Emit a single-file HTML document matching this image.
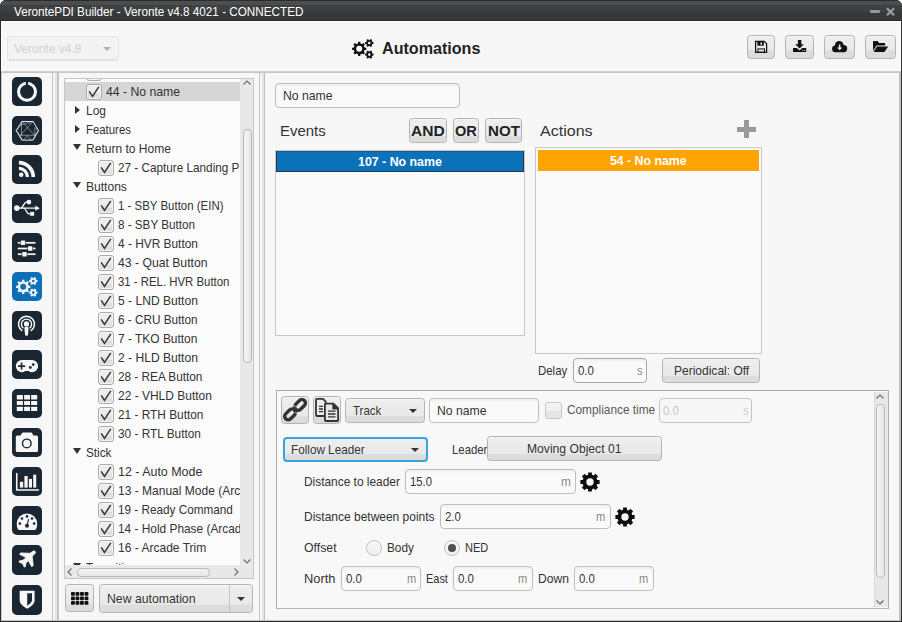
<!DOCTYPE html><html><head><meta charset="utf-8"><title>VerontePDI Builder</title><style>
*{box-sizing:border-box;margin:0;padding:0}
html,body{width:902px;height:622px;overflow:hidden}
body{background:#fff;font-family:"Liberation Sans",sans-serif;font-size:13px;color:#333;position:relative}
.a{position:absolute}
.t{position:absolute;white-space:pre;line-height:1;transform-origin:0 0}
.btn{position:absolute;border:1px solid #b4b4b4;border-radius:3.5px;background:linear-gradient(#eeeeee 0%,#e9e9e9 72%,#dddddd 73%,#dcdcdc 100%);box-shadow:inset 0 1px 0 #f6f6f6}
.inp{position:absolute;border:1px solid #bdbdbd;border-radius:4px;background:linear-gradient(#efefef,#fafafa 4px,#fafafa)}
.ico{position:absolute;left:12px;width:30px;height:29px;border-radius:5px;background:#1b2633;overflow:hidden}
.ico svg{position:absolute;left:0;top:0}
.cb{position:absolute;width:16px;height:16px;border:1px solid #ababab;box-shadow:inset 0 0 0 1px #f4f4f4;border-radius:3px;background:linear-gradient(#eeeeee 0%,#e9e9e9 62%,#dfdfdf 63%,#dfdfdf 100%)}
.arr{position:absolute;width:0;height:0;border-left:4px solid transparent;border-right:4px solid transparent;border-top:4px solid #333}
</style></head><body>
<div class="a" style="left:0px;top:0px;width:902px;height:622px;background:#2d2d2d;border-radius:6px 6px 0 0"></div>
<div class="a" style="left:0px;top:0px;width:902px;height:21px;background:linear-gradient(#2c2c2c 0,#2c2c2c 1px,#4c4e4f 1px,#4a4c4d 5.5px,#3e4142 5.5px,#3d4041 12.5px,#37393a 12.5px,#36383a 20px,#2b2b2b 20px);border-radius:6px 6px 0 0"></div>
<div class="t" style="left:14.0px;top:5.0px;font-size:13px;color:#fff;font-weight:normal;transform:scaleX(0.9000);">VerontePDI Builder - Veronte v4.8 4021 - CONNECTED</div>
<div class="a" style="left:870.3px;top:9.8px;width:9.700000000000045px;height:3.0px;background:#96989a;border-radius:1px"></div>
<svg class="a" style="left:884px;top:5px" width="14" height="14" viewBox="884 5 14 14"><path d="M887 8.2 L894 15.2 M894 8.2 L887 15.2" stroke="#9c9ea0" stroke-width="2.2"/></svg>
<div class="a" style="left:1px;top:21px;width:900px;height:599.5px;background:#f7f7f7"></div>
<div class="a" style="left:1px;top:21px;width:1px;height:51px;background:#fff"></div>
<div class="a" style="left:1px;top:72px;width:1px;height:548px;background:#c8c8c8"></div>
<div class="a" style="left:1px;top:21px;width:900px;height:1px;background:#fff"></div>
<div class="a" style="left:900px;top:21px;width:1px;height:51px;background:#fff"></div>
<div class="a" style="left:1px;top:619.5px;width:900px;height:1.0px;background:#c4c4c4"></div>
<div class="a" style="left:1px;top:71px;width:900px;height:2px;background:linear-gradient(#d2d2d2,#c2c2c2)"></div>
<div class="a" style="left:7px;top:36px;width:112px;height:25px;border:1px solid #e4e4e4;border-radius:3px;background:#f3f3f3"></div>
<div class="a" style="left:9px;top:59px;width:108px;height:1px;border-bottom:1px dotted #d4d4d4"></div>
<div class="t" style="left:14.0px;top:41.8px;font-size:13.5px;color:#d2d2d2;font-weight:normal;transform:scaleX(0.8890);">Veronte v4.8</div>
<div class="arr" style="left:103px;top:47px;border-top-color:#b0b0b0"></div>
<svg class="a" style="left:347.8px;top:34px" width="30" height="29" viewBox="0 0 30 29"><path d="M16.00 13.61 L18.31 13.67 L18.31 15.93 L16.00 15.99 Z M15.44 17.35 L17.02 19.03 L15.43 20.62 L13.75 19.04 Z M12.39 19.60 L12.33 21.91 L10.07 21.91 L10.01 19.60 Z M8.65 19.04 L6.97 20.62 L5.38 19.03 L6.96 17.35 Z M6.40 15.99 L4.09 15.93 L4.09 13.67 L6.40 13.61 Z M6.96 12.25 L5.38 10.57 L6.97 8.98 L8.65 10.56 Z M10.01 10.00 L10.07 7.69 L12.33 7.69 L12.39 10.00 Z M13.75 10.56 L15.43 8.98 L17.02 10.57 L15.44 12.25 Z " fill="#111"/><circle cx="11.20" cy="14.80" r="5.5" fill="#111"/><circle cx="11.20" cy="14.80" r="3.0" fill="#f7f7f7"/><path d="M23.88 7.93 L25.48 8.00 L25.48 10.00 L23.88 10.07 Z M23.51 10.70 L24.26 12.12 L22.52 13.12 L21.66 11.77 Z M20.94 11.77 L20.08 13.12 L18.34 12.12 L19.09 10.70 Z M18.72 10.07 L17.12 10.00 L17.12 8.00 L18.72 7.93 Z M19.09 7.30 L18.34 5.88 L20.08 4.88 L20.94 6.23 Z M21.66 6.23 L22.52 4.88 L24.26 5.88 L23.51 7.30 Z " fill="#111"/><circle cx="21.30" cy="9.00" r="3.1" fill="#111"/><circle cx="21.30" cy="9.00" r="1.3" fill="#f7f7f7"/><path d="M23.88 19.53 L25.48 19.60 L25.48 21.60 L23.88 21.67 Z M23.51 22.30 L24.26 23.72 L22.52 24.72 L21.66 23.37 Z M20.94 23.37 L20.08 24.72 L18.34 23.72 L19.09 22.30 Z M18.72 21.67 L17.12 21.60 L17.12 19.60 L18.72 19.53 Z M19.09 18.90 L18.34 17.48 L20.08 16.48 L20.94 17.83 Z M21.66 17.83 L22.52 16.48 L24.26 17.48 L23.51 18.90 Z " fill="#111"/><circle cx="21.30" cy="20.60" r="3.1" fill="#111"/><circle cx="21.30" cy="20.60" r="1.3" fill="#f7f7f7"/></svg>
<div class="t" style="left:382.4px;top:41.1px;font-size:16px;color:#222;font-weight:bold;transform:scaleX(1.0063);">Automations</div>
<div class="btn" style="left:747px;top:35px;width:28px;height:24px;background:linear-gradient(#eeeeee 0%,#e9e9e9 64%,#dddddd 65%,#dcdcdc 100%)"></div>
<div class="btn" style="left:785px;top:35px;width:29px;height:24px;background:linear-gradient(#eeeeee 0%,#e9e9e9 64%,#dddddd 65%,#dcdcdc 100%)"></div>
<div class="btn" style="left:824px;top:35px;width:31px;height:24px;background:linear-gradient(#eeeeee 0%,#e9e9e9 64%,#dddddd 65%,#dcdcdc 100%)"></div>
<div class="btn" style="left:865px;top:35px;width:31px;height:24px;background:linear-gradient(#eeeeee 0%,#e9e9e9 64%,#dddddd 65%,#dcdcdc 100%)"></div>
<svg class="a" style="left:754px;top:40px" width="14" height="14" viewBox="754 40 14 14"><path d="M755.6 41.4 L764.3 41.4 L766.6 43.7 L766.6 52.3 L755.6 52.3 Z" fill="none" stroke="#111" stroke-width="1.25"/><rect x="757.4" y="41.4" width="6.4" height="4.3" fill="#111"/><rect x="760.5" y="42.4" width="1.4" height="2.5" fill="#eee"/><rect x="757.9" y="48.9" width="6.6" height="3.4" fill="none" stroke="#111" stroke-width="1"/></svg>
<svg class="a" style="left:792px;top:39px" width="16" height="15" viewBox="792 39 16 15"><path d="M797.9 40.1 L801.3 40.1 L801.3 44.3 L803.8 44.3 L799.6 48.6 L795.2 44.3 L797.9 44.3 Z" fill="#111"/><path d="M793 48.1 L796.8 48.1 L799.6 50.4 L802.2 48.1 L806.2 48.1 L806.2 52 L793 52 Z" fill="#111"/><rect x="802.3" y="50.1" width="1" height="0.9" fill="#ddd"/><rect x="804.2" y="50.1" width="1" height="0.9" fill="#ddd"/></svg>
<svg class="a" style="left:832px;top:40.8px" width="16" height="12" viewBox="0 0 16 12"><circle cx="7.2" cy="4.3" r="4.3" fill="#111"/><circle cx="3.4" cy="7.9" r="3.3" fill="#111"/><circle cx="11.6" cy="7.6" r="3.6" fill="#111"/><rect x="3.4" y="6.5" width="8.2" height="4.7" fill="#111"/><path d="M6.9 3.6 L8.4 3.6 L8.4 6.4 L10.3 6.4 L7.65 9.3 L5 6.4 L6.9 6.4 Z" fill="#eee"/></svg>
<svg class="a" style="left:873px;top:40.8px" width="16" height="12" viewBox="0 0 16 12"><path d="M0 0.8 Q0 0 0.8 0 L4.4 0 Q5.2 0 5.4 0.8 L5.8 2 L11.4 2 Q12.2 2 12.2 2.8 L12.2 4.6 L3.4 4.6 L0 10 Z" fill="#111"/><path d="M3.8 5.6 L15.2 5.6 L11.4 10.9 L0.6 10.9 Z" fill="#111"/></svg>
<div class="a" style="left:52px;top:73px;width:1px;height:547px;background:#c6c6c6"></div>
<div class="a" style="left:55px;top:73px;width:2px;height:547px;background:#e4e4e4"></div>
<div class="a" style="left:57px;top:73px;width:2px;height:547px;background:#c4c4c4"></div>
<div class="a" style="left:259px;top:73px;width:1px;height:547px;background:#c6c6c6"></div>
<div class="a" style="left:262px;top:73px;width:2px;height:547px;background:#e4e4e4"></div>
<div class="a" style="left:264px;top:73px;width:1px;height:547px;background:#c0c0c0"></div>
<div class="a" style="left:898.8px;top:73px;width:1.8000000000000682px;height:547px;background:#c2c2c2"></div>
<div class="ico" style="top:77px;height:29px;background:#1b2633"><svg width="30" height="29" viewBox="0 0 30 29"><circle cx="15" cy="14.8" r="8.5" fill="none" stroke="#f7f7f7" stroke-width="3"/><rect x="13.85" y="3" width="2.3" height="6" fill="#1b2633"/></svg></div>
<div class="ico" style="top:116px;height:29px;background:#1b2633"><svg width="30" height="29" viewBox="0 0 30 29"><polygon points="4.2,14.6 9.9,5.5 21.1,5.5 26.5,14.6 21.1,24.1 9.9,24.1" fill="none" stroke="#f7f7f7" stroke-width="0.95"/><g stroke="#f7f7f7" stroke-width="0.55" opacity="0.8" fill="none"><path d="M9.9 5.5 L22.6 19.3 M21.1 5.5 L8.4 19.3 M7.9 19.3 L22.9 19.3 M9.5 5.9 L9.5 19.3 M22.9 11.5 L22.9 19.3 M11.6 24 L15.4 19.6 L19.1 24 M9.5 8.6 Q14 7.2 19.1 6.5 M4.2 14.6 L9.5 8.6 M26.5 14.6 L22.9 11.5 M4.2 14.6 L8.4 19.3 L9.9 24.1 M26.5 14.6 L22.9 19.3 L21.1 24.1"/></g></svg></div>
<div class="ico" style="top:155px;height:29px;background:#1b2633"><svg width="30" height="29" viewBox="0 0 30 29"><path d="M6.9 7.65 A14.35 14.35 0 0 1 21.25 22.0" fill="none" stroke="#f7f7f7" stroke-width="3.7"/><path d="M6.9 13.45 A8.55 8.55 0 0 1 15.450000000000001 22.0" fill="none" stroke="#f7f7f7" stroke-width="3.2"/><circle cx="9.2" cy="19.7" r="2.3" fill="#f7f7f7"/></svg></div>
<div class="ico" style="top:194px;height:29px;background:#1b2633"><svg width="30" height="29" viewBox="0 0 30 29"><circle cx="4.8" cy="14.1" r="2.8" fill="#f7f7f7"/><path d="M6 14.1 L24 14.1" stroke="#f7f7f7" stroke-width="1.4"/><polygon points="23.3,11.5 27.8,14.2 23.3,16.8" fill="#f7f7f7"/><path d="M8.5 14.1 C11.5 14.1 11.5 8.2 14.5 8.2 L16.5 8.2" fill="none" stroke="#f7f7f7" stroke-width="1.3"/><circle cx="16.9" cy="8.1" r="2.4" fill="#f7f7f7"/><path d="M11.5 14.1 C14.5 14.1 14 19.8 17 19.8 L18.5 19.8" fill="none" stroke="#f7f7f7" stroke-width="1.3"/><rect x="18.2" y="17.9" width="3.9" height="3.9" fill="#f7f7f7"/></svg></div>
<div class="ico" style="top:233px;height:29px;background:#1b2633"><svg width="30" height="29" viewBox="0 0 30 29"><rect x="5.8" y="8.950000000000001" width="17.7" height="1.7" fill="#f7f7f7"/><rect x="8.200000000000001" y="7.000000000000001" width="5.6" height="5.6" fill="#1b2633"/><rect x="8.8" y="7.6000000000000005" width="4.4" height="4.4" rx="0.5" fill="#f7f7f7"/><rect x="5.8" y="14.65" width="17.7" height="1.7" fill="#f7f7f7"/><rect x="15.4" y="12.7" width="5.6" height="5.6" fill="#1b2633"/><rect x="16" y="13.3" width="4.4" height="4.4" rx="0.5" fill="#f7f7f7"/><rect x="5.8" y="20.349999999999998" width="17.7" height="1.7" fill="#f7f7f7"/><rect x="9.700000000000001" y="18.4" width="5.6" height="5.6" fill="#1b2633"/><rect x="10.3" y="19.0" width="4.4" height="4.4" rx="0.5" fill="#f7f7f7"/></svg></div>
<div class="ico" style="top:272px;height:29px;background:#0b70b8"><svg width="30" height="29" viewBox="0 0 30 29"><path d="M16.00 13.61 L18.31 13.67 L18.31 15.93 L16.00 15.99 Z M15.44 17.35 L17.02 19.03 L15.43 20.62 L13.75 19.04 Z M12.39 19.60 L12.33 21.91 L10.07 21.91 L10.01 19.60 Z M8.65 19.04 L6.97 20.62 L5.38 19.03 L6.96 17.35 Z M6.40 15.99 L4.09 15.93 L4.09 13.67 L6.40 13.61 Z M6.96 12.25 L5.38 10.57 L6.97 8.98 L8.65 10.56 Z M10.01 10.00 L10.07 7.69 L12.33 7.69 L12.39 10.00 Z M13.75 10.56 L15.43 8.98 L17.02 10.57 L15.44 12.25 Z " fill="#f7f7f7"/><circle cx="11.20" cy="14.80" r="5.5" fill="#f7f7f7"/><circle cx="11.20" cy="14.80" r="3.0" fill="#0b70b8"/><path d="M23.88 7.93 L25.48 8.00 L25.48 10.00 L23.88 10.07 Z M23.51 10.70 L24.26 12.12 L22.52 13.12 L21.66 11.77 Z M20.94 11.77 L20.08 13.12 L18.34 12.12 L19.09 10.70 Z M18.72 10.07 L17.12 10.00 L17.12 8.00 L18.72 7.93 Z M19.09 7.30 L18.34 5.88 L20.08 4.88 L20.94 6.23 Z M21.66 6.23 L22.52 4.88 L24.26 5.88 L23.51 7.30 Z " fill="#f7f7f7"/><circle cx="21.30" cy="9.00" r="3.1" fill="#f7f7f7"/><circle cx="21.30" cy="9.00" r="1.3" fill="#0b70b8"/><path d="M23.88 19.53 L25.48 19.60 L25.48 21.60 L23.88 21.67 Z M23.51 22.30 L24.26 23.72 L22.52 24.72 L21.66 23.37 Z M20.94 23.37 L20.08 24.72 L18.34 23.72 L19.09 22.30 Z M18.72 21.67 L17.12 21.60 L17.12 19.60 L18.72 19.53 Z M19.09 18.90 L18.34 17.48 L20.08 16.48 L20.94 17.83 Z M21.66 17.83 L22.52 16.48 L24.26 17.48 L23.51 18.90 Z " fill="#f7f7f7"/><circle cx="21.30" cy="20.60" r="3.1" fill="#f7f7f7"/><circle cx="21.30" cy="20.60" r="1.3" fill="#0b70b8"/></svg></div>
<div class="ico" style="top:311px;height:29px;background:#1b2633"><svg width="30" height="29" viewBox="0 0 30 29"><path d="M10.26 19.98 A8.0 8.0 0 1 1 18.74 19.98" fill="none" stroke="#f7f7f7" stroke-width="1.5"/><path d="M11.36 17.22 A5.1 5.1 0 1 1 17.64 17.22" fill="none" stroke="#f7f7f7" stroke-width="1.4"/><circle cx="14.5" cy="12.9" r="2.6" fill="#f7f7f7"/><path d="M12.4 17.2 Q12.4 16.1 13.5 16.1 L15.6 16.1 Q16.7 16.1 16.6 17.2 L16 23.8 Q15.9 24.8 14.9 24.8 L14.2 24.8 Q13.2 24.8 13.1 23.8 Z" fill="#f7f7f7"/></svg></div>
<div class="ico" style="top:350px;height:29px;background:#1b2633"><svg width="30" height="29" viewBox="0 0 30 29"><path d="M9.9 10 L20 10 A6.1 6.1 0 0 1 20 22.2 Q18 22.2 16.6 21 L13.3 21 Q11.9 22.2 9.9 22.2 A6.1 6.1 0 0 1 9.9 10 Z" fill="#f7f7f7"/><path d="M9.6 12.6 L9.6 19.6 M6.1 16.1 L13.1 16.1" stroke="#1b2633" stroke-width="1.6"/><circle cx="21.2" cy="14.6" r="1.35" fill="#1b2633"/><circle cx="18.3" cy="17.5" r="1.4" fill="#1b2633"/></svg></div>
<div class="ico" style="top:389px;height:29px;background:#1b2633"><svg width="30" height="29" viewBox="0 0 30 29"><rect x="4.8" y="6" width="6.1" height="4.6" rx="0.6" fill="#f7f7f7"/><rect x="4.8" y="11.9" width="6.1" height="4.2" rx="0.6" fill="#f7f7f7"/><rect x="4.8" y="17.7" width="6.1" height="4.3" rx="0.6" fill="#f7f7f7"/><rect x="12.1" y="6" width="5.9" height="4.6" rx="0.6" fill="#f7f7f7"/><rect x="12.1" y="11.9" width="5.9" height="4.2" rx="0.6" fill="#f7f7f7"/><rect x="12.1" y="17.7" width="5.9" height="4.3" rx="0.6" fill="#f7f7f7"/><rect x="19.1" y="6" width="6.1" height="4.6" rx="0.6" fill="#f7f7f7"/><rect x="19.1" y="11.9" width="6.1" height="4.2" rx="0.6" fill="#f7f7f7"/><rect x="19.1" y="17.7" width="6.1" height="4.3" rx="0.6" fill="#f7f7f7"/></svg></div>
<div class="ico" style="top:428px;height:29px;background:#1b2633"><svg width="30" height="29" viewBox="0 0 30 29"><path d="M5.3 7.4 L8.6 7.4 L9.8 5.2 Q10.2 4.4 11 4.4 L19 4.4 Q19.8 4.4 20.2 5.2 L21.3 7.4 L24.5 7.4 Q26 7.4 26 8.9 L26 22.4 Q26 23.9 24.5 23.9 L5.3 23.9 Q3.8 23.9 3.8 22.4 L3.8 8.9 Q3.8 7.4 5.3 7.4 Z" fill="#f7f7f7"/><circle cx="14.8" cy="15.4" r="4.3" fill="none" stroke="#1b2633" stroke-width="1.4"/></svg></div>
<div class="ico" style="top:467px;height:29px;background:#1b2633"><svg width="30" height="29" viewBox="0 0 30 29"><path d="M4.75 6 L4.75 23 L26.9 23" fill="none" stroke="#f7f7f7" stroke-width="1.6"/><rect x="7.9" y="14.8" width="3.3" height="5.8" fill="#f7f7f7"/><rect x="12.4" y="9" width="3.3" height="11.6" fill="#f7f7f7"/><rect x="16.9" y="11.9" width="3.1" height="8.7" fill="#f7f7f7"/><rect x="21.2" y="7.7" width="3" height="12.9" fill="#f7f7f7"/></svg></div>
<div class="ico" style="top:506px;height:29px;background:#1b2633"><svg width="30" height="29" viewBox="0 0 30 29"><path d="M4.7 17.7 A10.25 10.25 0 0 1 25.2 17.7 Q25.2 21 24 23.2 Q23.6 23.9 22.8 23.9 L7.1 23.9 Q6.3 23.9 5.9 23.2 Q4.7 21 4.7 17.7 Z" fill="#f7f7f7"/><circle cx="7.9" cy="17.6" r="1.3" fill="#1b2633"/><circle cx="10" cy="12.5" r="1.3" fill="#1b2633"/><circle cx="15" cy="10.4" r="1.3" fill="#1b2633"/><circle cx="20" cy="12.5" r="1.3" fill="#1b2633"/><circle cx="22.1" cy="17.6" r="1.3" fill="#1b2633"/><circle cx="15" cy="19.7" r="2" fill="#1b2633"/><path d="M15 19.7 L16.5 13.5" stroke="#1b2633" stroke-width="1.1" stroke-linecap="round"/></svg></div>
<div class="ico" style="top:545px;height:30px;background:#1b2633"><svg width="30" height="30" viewBox="0 0 30 30"><polygon points="23,6.2 21.6,5.9 18,8.3 8.6,7.9 7.6,9.3 14.2,12.6 11,15.2 7.3,15.9 7,17 10.6,18.6 12.3,22.1 13.4,21.6 13.9,18.2 16.4,15.6 19.6,21.6 21.2,20.7 20.2,11.5 23.5,7.7" fill="#f7f7f7" stroke="#f7f7f7" stroke-width="0.85" stroke-linejoin="round"/></svg></div>
<div class="ico" style="top:585px;height:30px;background:#1b2633"><svg width="30" height="30" viewBox="0 0 30 30"><path d="M7.7 5.7 L22.6 5.7 L22.6 15.5 Q22.6 19.5 15.2 23.8 Q7.7 19.5 7.7 15.5 Z" fill="#f7f7f7"/><path d="M15.2 8.2 L20 8.2 L20 15.3 Q20 17.7 15.2 20.8 Z" fill="#1b2633"/></svg></div>
<div class="a" style="left:64px;top:78px;width:190.4px;height:501px;border:1px solid #c6c6c6;background:#fbfbfb"></div>
<div class="a" style="left:65px;top:82px;width:175.2px;height:18.700000000000003px;background:#d6d6d6"></div>
<div class="a" style="left:65px;top:79px;width:175.2px;height:486px;overflow:hidden">
<div class="cb" style="left:21px;top:-14px"></div>
<div class="cb" style="left:21px;top:5px"><svg width="14" height="14" viewBox="0 0 14 14" style="position:absolute;left:0;top:0"><path d="M2.2 6.3 L5.5 11.4 L11.8 1.9" fill="none" stroke="#383838" stroke-width="1.55"/></svg></div>
<div class="t" style="left:40.8px;top:6.0px;font-size:13px;color:#333;font-weight:normal;transform:scaleX(0.9408);">44 - No name</div>
<div class="t" style="left:21.1px;top:25.0px;font-size:13px;color:#333;font-weight:normal;transform:scaleX(0.9169);">Log</div>
<div class="a" style="left:9.5px;top:26.5px;width:0;height:0;border-top:4px solid transparent;border-bottom:4px solid transparent;border-left:5.5px solid #333"></div>
<div class="t" style="left:21.1px;top:44.0px;font-size:13px;color:#333;font-weight:normal;transform:scaleX(0.8750);">Features</div>
<div class="a" style="left:9.5px;top:45.5px;width:0;height:0;border-top:4px solid transparent;border-bottom:4px solid transparent;border-left:5.5px solid #333"></div>
<div class="t" style="left:21.1px;top:63.0px;font-size:13px;color:#333;font-weight:normal;transform:scaleX(0.9252);">Return to Home</div>
<div class="a" style="left:8.299999999999997px;top:65.4px;width:0;height:0;border-left:4.2px solid transparent;border-right:4.2px solid transparent;border-top:6px solid #333"></div>
<div class="cb" style="left:33px;top:81px"><svg width="14" height="14" viewBox="0 0 14 14" style="position:absolute;left:0;top:0"><path d="M2.2 6.3 L5.5 11.4 L11.8 1.9" fill="none" stroke="#383838" stroke-width="1.55"/></svg></div>
<div class="t" style="left:52.9px;top:82.0px;font-size:13px;color:#333;font-weight:normal;transform:scaleX(0.9030);">27 - Capture Landing P</div>
<div class="t" style="left:21.1px;top:101.0px;font-size:13px;color:#333;font-weight:normal;transform:scaleX(0.9276);">Buttons</div>
<div class="a" style="left:8.299999999999997px;top:103.4px;width:0;height:0;border-left:4.2px solid transparent;border-right:4.2px solid transparent;border-top:6px solid #333"></div>
<div class="cb" style="left:33px;top:119px"><svg width="14" height="14" viewBox="0 0 14 14" style="position:absolute;left:0;top:0"><path d="M2.2 6.3 L5.5 11.4 L11.8 1.9" fill="none" stroke="#383838" stroke-width="1.55"/></svg></div>
<div class="t" style="left:52.9px;top:120.0px;font-size:13px;color:#333;font-weight:normal;transform:scaleX(0.8813);">1 - SBY Button (EIN)</div>
<div class="cb" style="left:33px;top:138px"><svg width="14" height="14" viewBox="0 0 14 14" style="position:absolute;left:0;top:0"><path d="M2.2 6.3 L5.5 11.4 L11.8 1.9" fill="none" stroke="#383838" stroke-width="1.55"/></svg></div>
<div class="t" style="left:52.9px;top:139.0px;font-size:13px;color:#333;font-weight:normal;transform:scaleX(0.8966);">8 - SBY Button</div>
<div class="cb" style="left:33px;top:157px"><svg width="14" height="14" viewBox="0 0 14 14" style="position:absolute;left:0;top:0"><path d="M2.2 6.3 L5.5 11.4 L11.8 1.9" fill="none" stroke="#383838" stroke-width="1.55"/></svg></div>
<div class="t" style="left:52.9px;top:158.0px;font-size:13px;color:#333;font-weight:normal;transform:scaleX(0.9138);">4 - HVR Button</div>
<div class="cb" style="left:33px;top:176px"><svg width="14" height="14" viewBox="0 0 14 14" style="position:absolute;left:0;top:0"><path d="M2.2 6.3 L5.5 11.4 L11.8 1.9" fill="none" stroke="#383838" stroke-width="1.55"/></svg></div>
<div class="t" style="left:52.9px;top:177.0px;font-size:13px;color:#333;font-weight:normal;transform:scaleX(0.9381);">43 - Quat Button</div>
<div class="cb" style="left:33px;top:195px"><svg width="14" height="14" viewBox="0 0 14 14" style="position:absolute;left:0;top:0"><path d="M2.2 6.3 L5.5 11.4 L11.8 1.9" fill="none" stroke="#383838" stroke-width="1.55"/></svg></div>
<div class="t" style="left:52.9px;top:196.0px;font-size:13px;color:#333;font-weight:normal;transform:scaleX(0.8760);">31 - REL. HVR Button</div>
<div class="cb" style="left:33px;top:214px"><svg width="14" height="14" viewBox="0 0 14 14" style="position:absolute;left:0;top:0"><path d="M2.2 6.3 L5.5 11.4 L11.8 1.9" fill="none" stroke="#383838" stroke-width="1.55"/></svg></div>
<div class="t" style="left:52.9px;top:215.0px;font-size:13px;color:#333;font-weight:normal;transform:scaleX(0.9291);">5 - LND Button</div>
<div class="cb" style="left:33px;top:233px"><svg width="14" height="14" viewBox="0 0 14 14" style="position:absolute;left:0;top:0"><path d="M2.2 6.3 L5.5 11.4 L11.8 1.9" fill="none" stroke="#383838" stroke-width="1.55"/></svg></div>
<div class="t" style="left:52.9px;top:234.0px;font-size:13px;color:#333;font-weight:normal;transform:scaleX(0.9029);">6 - CRU Button</div>
<div class="cb" style="left:33px;top:252px"><svg width="14" height="14" viewBox="0 0 14 14" style="position:absolute;left:0;top:0"><path d="M2.2 6.3 L5.5 11.4 L11.8 1.9" fill="none" stroke="#383838" stroke-width="1.55"/></svg></div>
<div class="t" style="left:52.9px;top:253.0px;font-size:13px;color:#333;font-weight:normal;transform:scaleX(0.9183);">7 - TKO Button</div>
<div class="cb" style="left:33px;top:271px"><svg width="14" height="14" viewBox="0 0 14 14" style="position:absolute;left:0;top:0"><path d="M2.2 6.3 L5.5 11.4 L11.8 1.9" fill="none" stroke="#383838" stroke-width="1.55"/></svg></div>
<div class="t" style="left:52.9px;top:272.0px;font-size:13px;color:#333;font-weight:normal;transform:scaleX(0.9291);">2 - HLD Button</div>
<div class="cb" style="left:33px;top:290px"><svg width="14" height="14" viewBox="0 0 14 14" style="position:absolute;left:0;top:0"><path d="M2.2 6.3 L5.5 11.4 L11.8 1.9" fill="none" stroke="#383838" stroke-width="1.55"/></svg></div>
<div class="t" style="left:52.9px;top:291.0px;font-size:13px;color:#333;font-weight:normal;transform:scaleX(0.9052);">28 - REA Button</div>
<div class="cb" style="left:33px;top:309px"><svg width="14" height="14" viewBox="0 0 14 14" style="position:absolute;left:0;top:0"><path d="M2.2 6.3 L5.5 11.4 L11.8 1.9" fill="none" stroke="#383838" stroke-width="1.55"/></svg></div>
<div class="t" style="left:52.9px;top:310.0px;font-size:13px;color:#333;font-weight:normal;transform:scaleX(0.9216);">22 - VHLD Button</div>
<div class="cb" style="left:33px;top:328px"><svg width="14" height="14" viewBox="0 0 14 14" style="position:absolute;left:0;top:0"><path d="M2.2 6.3 L5.5 11.4 L11.8 1.9" fill="none" stroke="#383838" stroke-width="1.55"/></svg></div>
<div class="t" style="left:52.9px;top:329.0px;font-size:13px;color:#333;font-weight:normal;transform:scaleX(0.9114);">21 - RTH Button</div>
<div class="cb" style="left:33px;top:347px"><svg width="14" height="14" viewBox="0 0 14 14" style="position:absolute;left:0;top:0"><path d="M2.2 6.3 L5.5 11.4 L11.8 1.9" fill="none" stroke="#383838" stroke-width="1.55"/></svg></div>
<div class="t" style="left:52.9px;top:348.0px;font-size:13px;color:#333;font-weight:normal;transform:scaleX(0.9104);">30 - RTL Button</div>
<div class="t" style="left:21.1px;top:367.0px;font-size:13px;color:#333;font-weight:normal;transform:scaleX(0.9052);">Stick</div>
<div class="a" style="left:8.299999999999997px;top:369.4px;width:0;height:0;border-left:4.2px solid transparent;border-right:4.2px solid transparent;border-top:6px solid #333"></div>
<div class="cb" style="left:33px;top:385px"><svg width="14" height="14" viewBox="0 0 14 14" style="position:absolute;left:0;top:0"><path d="M2.2 6.3 L5.5 11.4 L11.8 1.9" fill="none" stroke="#383838" stroke-width="1.55"/></svg></div>
<div class="t" style="left:52.9px;top:386.0px;font-size:13px;color:#333;font-weight:normal;transform:scaleX(0.9561);">12 - Auto Mode</div>
<div class="cb" style="left:33px;top:404px"><svg width="14" height="14" viewBox="0 0 14 14" style="position:absolute;left:0;top:0"><path d="M2.2 6.3 L5.5 11.4 L11.8 1.9" fill="none" stroke="#383838" stroke-width="1.55"/></svg></div>
<div class="t" style="left:52.9px;top:405.0px;font-size:13px;color:#333;font-weight:normal;transform:scaleX(0.9241);">13 - Manual Mode (Arc</div>
<div class="cb" style="left:33px;top:423px"><svg width="14" height="14" viewBox="0 0 14 14" style="position:absolute;left:0;top:0"><path d="M2.2 6.3 L5.5 11.4 L11.8 1.9" fill="none" stroke="#383838" stroke-width="1.55"/></svg></div>
<div class="t" style="left:52.9px;top:424.0px;font-size:13px;color:#333;font-weight:normal;transform:scaleX(0.9035);">19 - Ready Command</div>
<div class="cb" style="left:33px;top:442px"><svg width="14" height="14" viewBox="0 0 14 14" style="position:absolute;left:0;top:0"><path d="M2.2 6.3 L5.5 11.4 L11.8 1.9" fill="none" stroke="#383838" stroke-width="1.55"/></svg></div>
<div class="t" style="left:52.9px;top:443.0px;font-size:13px;color:#333;font-weight:normal;transform:scaleX(0.9132);">14 - Hold Phase (Arcad</div>
<div class="cb" style="left:33px;top:461px"><svg width="14" height="14" viewBox="0 0 14 14" style="position:absolute;left:0;top:0"><path d="M2.2 6.3 L5.5 11.4 L11.8 1.9" fill="none" stroke="#383838" stroke-width="1.55"/></svg></div>
<div class="t" style="left:52.9px;top:462.0px;font-size:13px;color:#333;font-weight:normal;transform:scaleX(0.9258);">16 - Arcade Trim</div>
<div class="t" style="left:21.1px;top:482.0px;font-size:13px;color:#333;font-weight:normal;transform:scaleX(0.9016);">Transitions</div>
<div class="a" style="left:8.299999999999997px;top:484.4px;width:0;height:0;border-left:4.2px solid transparent;border-right:4.2px solid transparent;border-top:6px solid #333"></div>
</div>
<div class="a" style="left:240.2px;top:79px;width:13.200000000000017px;height:499px;background:#e8e8e8"></div>
<div class="a" style="left:242.5px;top:128.5px;width:9.0px;height:234.5px;border:1px solid #b9b9b9;border-radius:4px;background:linear-gradient(90deg,#f4f4f4,#e6e6e6)"></div>
<svg class="a" style="left:242.8px;top:79.3px;transform:rotate(0deg)" width="8" height="8" viewBox="0 0 8 6"><path d="M0.5 4.5 L4 1 L7.5 4.5" fill="none" stroke="#6c6c6c" stroke-width="1.15"/></svg>
<svg class="a" style="left:242.8px;top:556.7px;transform:rotate(180deg)" width="8" height="8" viewBox="0 0 8 6"><path d="M0.5 4.5 L4 1 L7.5 4.5" fill="none" stroke="#6c6c6c" stroke-width="1.15"/></svg>
<div class="a" style="left:65px;top:565px;width:188.4px;height:13px;background:#e8e8e8"></div>
<div class="a" style="left:76.5px;top:567.5px;width:133.5px;height:9.0px;border:1px solid #b9b9b9;border-radius:4px;background:linear-gradient(#f4f4f4,#e6e6e6)"></div>
<svg class="a" style="left:65.5px;top:568px;transform:rotate(-90deg)" width="8" height="8" viewBox="0 0 8 6"><path d="M0.5 4.5 L4 1 L7.5 4.5" fill="none" stroke="#6c6c6c" stroke-width="1.15"/></svg>
<svg class="a" style="left:231.5px;top:568px;transform:rotate(90deg)" width="8" height="8" viewBox="0 0 8 6"><path d="M0.5 4.5 L4 1 L7.5 4.5" fill="none" stroke="#6c6c6c" stroke-width="1.15"/></svg>
<div class="btn" style="left:65px;top:584px;width:29px;height:28px;"></div>
<svg class="a" style="left:71px;top:592px" width="18" height="13" viewBox="0 0 18 13"><rect x="0.0" y="0.0" width="3.9" height="3.7" rx="0.9" fill="#111"/><rect x="0.0" y="4.5" width="3.9" height="3.7" rx="0.9" fill="#111"/><rect x="0.0" y="9.0" width="3.9" height="3.7" rx="0.9" fill="#111"/><rect x="4.5" y="0.0" width="3.9" height="3.7" rx="0.9" fill="#111"/><rect x="4.5" y="4.5" width="3.9" height="3.7" rx="0.9" fill="#111"/><rect x="4.5" y="9.0" width="3.9" height="3.7" rx="0.9" fill="#111"/><rect x="9.0" y="0.0" width="3.9" height="3.7" rx="0.9" fill="#111"/><rect x="9.0" y="4.5" width="3.9" height="3.7" rx="0.9" fill="#111"/><rect x="9.0" y="9.0" width="3.9" height="3.7" rx="0.9" fill="#111"/><rect x="13.5" y="0.0" width="3.9" height="3.7" rx="0.9" fill="#111"/><rect x="13.5" y="4.5" width="3.9" height="3.7" rx="0.9" fill="#111"/><rect x="13.5" y="9.0" width="3.9" height="3.7" rx="0.9" fill="#111"/></svg>
<div class="btn" style="left:99px;top:584px;width:154px;height:28.5px;"></div>
<div class="a" style="left:229px;top:585px;width:1px;height:26.5px;background:#c6c6c6"></div>
<div class="t" style="left:107.3px;top:591.7px;font-size:13px;color:#333;font-weight:normal;transform:scaleX(0.9420);">New automation</div>
<div class="arr" style="left:237px;top:597px;border-top-color:#333"></div>
<div class="inp" style="left:275px;top:83px;width:185px;height:25px;"></div>
<div class="t" style="left:282.9px;top:89.0px;font-size:13px;color:#333;font-weight:normal;transform:scaleX(0.9403);">No name</div>
<div class="t" style="left:280.2px;top:123.2px;font-size:15px;color:#333;font-weight:normal;transform:scaleX(0.9965);">Events</div>
<div class="t" style="left:539.8px;top:123.2px;font-size:15px;color:#333;font-weight:normal;transform:scaleX(1.0690);">Actions</div>
<div class="btn" style="left:409px;top:118px;width:38px;height:24.5px;"></div>
<div class="t" style="left:411.1px;top:122.9px;font-size:15px;color:#222;font-weight:bold;transform:scaleX(1.0369);">AND</div>
<div class="btn" style="left:453px;top:118px;width:26px;height:24.5px;"></div>
<div class="t" style="left:455.1px;top:122.9px;font-size:15px;color:#222;font-weight:bold;transform:scaleX(0.9733);">OR</div>
<div class="btn" style="left:485px;top:118px;width:37px;height:24.5px;"></div>
<div class="t" style="left:487.6px;top:122.9px;font-size:15px;color:#222;font-weight:bold;transform:scaleX(1.0072);">NOT</div>
<div class="a" style="left:275px;top:150px;width:250px;height:185.5px;border:1px solid #c8c8c8;background:#fafafa"></div>
<div class="a" style="left:276px;top:151px;width:248px;height:21px;background:#0b71b9;border:1px solid #1d3a52;border-top-color:#1d5a8a"></div>
<div class="t" style="left:358.3px;top:154.8px;font-size:13px;color:#fff;font-weight:bold;transform:scaleX(0.9517);">107 - No name</div>
<div class="a" style="left:535px;top:147px;width:227px;height:206.5px;border:1px solid #c8c8c8;background:#fafafa"></div>
<div class="a" style="left:538px;top:150px;width:221px;height:20.5px;background:#ffa400"></div>
<div class="t" style="left:609.9px;top:153.7px;font-size:13px;color:#fff;font-weight:bold;transform:scaleX(0.9466);">54 - No name</div>
<div class="a" style="left:737px;top:126.5px;width:19px;height:5.0px;background:#999"></div>
<div class="a" style="left:743.5px;top:120px;width:5.5px;height:18px;background:#999"></div>
<div class="t" style="left:538.3px;top:364.3px;font-size:13px;color:#333;font-weight:normal;transform:scaleX(0.8782);">Delay</div>
<div class="inp" style="left:573px;top:358px;width:74px;height:25px;border-color:#a8a8a8"></div>
<div class="t" style="left:578.1px;top:364.3px;font-size:13px;color:#333;font-weight:normal;transform:scaleX(0.8795);">0.0</div>
<div class="t" style="left:637.2px;top:365.1px;font-size:12px;color:#8a8a80;font-weight:normal;transform:scaleX(0.9300);">s</div>
<div class="btn" style="left:662px;top:358px;width:98px;height:25px;"></div>
<div class="t" style="left:673.8px;top:364.3px;font-size:13px;color:#333;font-weight:normal;transform:scaleX(0.9236);">Periodical: Off</div>
<div class="a" style="left:276px;top:390px;width:613px;height:218.70000000000005px;border:1px solid #b0b0b0;border-top:1.5px solid #a8a8a8;border-bottom:1.8px solid #b4b4b4;background:#f8f8f8"></div>
<div class="a" style="left:874px;top:391.5px;width:14px;height:215.5px;background:#e8e8e8;border-left:1px solid #d8d8d8"></div>
<div class="a" style="left:876px;top:404px;width:9px;height:173.70000000000005px;border:1px solid #b9b9b9;border-radius:4px;background:linear-gradient(90deg,#f4f4f4,#e6e6e6)"></div>
<svg class="a" style="left:876px;top:392.7px;transform:rotate(0deg)" width="8" height="8" viewBox="0 0 8 6"><path d="M0.5 4.5 L4 1 L7.5 4.5" fill="none" stroke="#6c6c6c" stroke-width="1.15"/></svg>
<svg class="a" style="left:876px;top:597.8px;transform:rotate(180deg)" width="8" height="8" viewBox="0 0 8 6"><path d="M0.5 4.5 L4 1 L7.5 4.5" fill="none" stroke="#6c6c6c" stroke-width="1.15"/></svg>
<div class="btn" style="left:281px;top:396px;width:28px;height:28px;"></div>
<div class="btn" style="left:313px;top:396px;width:28px;height:28px;"></div>
<svg class="a" style="left:281px;top:396px" width="28" height="28" viewBox="281 396 28 28"><g fill="none" stroke="#333" stroke-width="3.4"><rect x="-6.25" y="-3.5" width="12.5" height="7" rx="3.5" transform="translate(290.1 414.4) rotate(-45)"/><rect x="-6.25" y="-3.5" width="12.5" height="7" rx="3.5" transform="translate(300 404.9) rotate(-45)"/></g><path d="M291.4 404.4 L295.6 406.8 M295.2 412.4 L298.8 414.6" stroke="#e4e4e4" stroke-width="0.9"/></svg>
<svg class="a" style="left:313px;top:396px" width="28" height="28" viewBox="313 396 28 28"><g fill="none" stroke="#333" stroke-width="1.8" stroke-linejoin="round"><path d="M316 400 Q316 398.9 317.1 398.9 L323 398.9 L325.7 401.6 L325.7 416 L317.1 416 Q316 416 316 414.9 Z"/><path d="M319 406.3 L323 406.3 M319 409 L323 409 M319 411.7 L323 411.7" stroke-width="1.3"/><path d="M324.9 404.7 Q324.9 403.6 326 403.6 L333.2 403.6 L338.1 408.5 L338.1 420 Q338.1 421 337 421 L326 421 Q324.9 421 324.9 420 Z" fill="#e6e6e6"/><path d="M333.2 403.6 L333.2 408.5 L338.1 408.5 Z" fill="#333"/><path d="M328 411.2 L335.5 411.2 M328 414 L335.5 414 M328 416.8 L335.5 416.8" stroke-width="1.3"/></g></svg>
<div class="btn" style="left:345px;top:398px;width:79.5px;height:25px;"></div>
<div class="t" style="left:353.2px;top:403.9px;font-size:13px;color:#333;font-weight:normal;transform:scaleX(0.8804);">Track</div>
<div class="arr" style="left:409.2px;top:409.2px;border-top-color:#333"></div>
<div class="inp" style="left:429px;top:398px;width:110px;height:25px;"></div>
<div class="t" style="left:436.9px;top:403.9px;font-size:13px;color:#333;font-weight:normal;transform:scaleX(0.9384);">No name</div>
<div class="a" style="left:544.5px;top:402px;width:17.5px;height:17px;border:1px solid #c8c8c8;border-radius:3px;background:linear-gradient(#f4f4f4 0%,#f0f0f0 55%,#e6e6e6 56%,#e6e6e6 100%)"></div>
<div class="t" style="left:566.6px;top:403.3px;font-size:13px;color:#585858;font-weight:normal;transform:scaleX(0.9099);">Compliance time</div>
<div class="inp" style="left:659px;top:398px;width:93px;height:24.5px;border-color:#c4c4c4;background:#f7f7f7"></div>
<div class="t" style="left:663.4px;top:403.9px;font-size:13px;color:#c4c4c4;font-weight:normal;transform:scaleX(0.8685);">0.0</div>
<div class="t" style="left:742.6px;top:404.7px;font-size:12px;color:#d0d0d0;font-weight:normal;transform:scaleX(0.9300);">s</div>
<div class="btn" style="left:283px;top:437px;width:144.5px;height:25px;border:2px solid #35a5dc;border-radius:4px;box-shadow:none"></div>
<div class="t" style="left:291.1px;top:442.7px;font-size:13px;color:#333;font-weight:normal;transform:scaleX(0.9013);">Follow Leader</div>
<div class="arr" style="left:411px;top:447.7px;border-top-color:#333"></div>
<div class="t" style="left:452.2px;top:442.7px;font-size:13px;color:#333;font-weight:normal;transform:scaleX(0.8744);">Leader</div>
<div class="btn" style="left:487px;top:436px;width:175px;height:24.5px;"></div>
<div class="t" style="left:527.1px;top:441.6px;font-size:13px;color:#333;font-weight:normal;transform:scaleX(0.9331);">Moving Object 01</div>
<div class="t" style="left:304.0px;top:475.0px;font-size:13px;color:#333;font-weight:normal;transform:scaleX(0.9152);">Distance to leader</div>
<div class="inp" style="left:405px;top:469px;width:171px;height:25px;"></div>
<div class="t" style="left:410.4px;top:475.0px;font-size:13px;color:#333;font-weight:normal;transform:scaleX(0.8652);">15.0</div>
<div class="t" style="left:561.4px;top:475.8px;font-size:12px;color:#8a8a80;font-weight:normal;transform:scaleX(0.9900);">m</div>
<div class="t" style="left:304.0px;top:510.0px;font-size:13px;color:#333;font-weight:normal;transform:scaleX(0.9220);">Distance between points</div>
<div class="inp" style="left:440px;top:504px;width:171px;height:25px;"></div>
<div class="t" style="left:444.8px;top:510.0px;font-size:13px;color:#333;font-weight:normal;transform:scaleX(0.8795);">2.0</div>
<div class="t" style="left:596.1px;top:510.8px;font-size:12px;color:#8a8a80;font-weight:normal;transform:scaleX(0.9300);">m</div>
<svg class="a" style="left:579.4px;top:471px" width="22" height="22" viewBox="-11 -11 22 22"><path d="M6.57 -1.91 L9.61 -1.91 L9.61 1.91 L6.57 1.91 Z M5.99 3.30 L8.15 5.44 L5.44 8.15 L3.30 5.99 Z M1.91 6.57 L1.91 9.61 L-1.91 9.61 L-1.91 6.57 Z M-3.30 5.99 L-5.44 8.15 L-8.15 5.44 L-5.99 3.30 Z M-6.57 1.91 L-9.61 1.91 L-9.61 -1.91 L-6.57 -1.91 Z M-5.99 -3.30 L-8.15 -5.44 L-5.44 -8.15 L-3.30 -5.99 Z M-1.91 -6.57 L-1.91 -9.61 L1.91 -9.61 L1.91 -6.57 Z M3.30 -5.99 L5.44 -8.15 L8.15 -5.44 L5.99 -3.30 Z " fill="#0c0c0c"/><circle cx="0.00" cy="0.00" r="7.6" fill="#0c0c0c"/><circle cx="0.00" cy="0.00" r="3.7" fill="#f7f7f7"/></svg>
<svg class="a" style="left:614.4px;top:505.9px" width="22" height="22" viewBox="-11 -11 22 22"><path d="M6.57 -1.91 L9.61 -1.91 L9.61 1.91 L6.57 1.91 Z M5.99 3.30 L8.15 5.44 L5.44 8.15 L3.30 5.99 Z M1.91 6.57 L1.91 9.61 L-1.91 9.61 L-1.91 6.57 Z M-3.30 5.99 L-5.44 8.15 L-8.15 5.44 L-5.99 3.30 Z M-6.57 1.91 L-9.61 1.91 L-9.61 -1.91 L-6.57 -1.91 Z M-5.99 -3.30 L-8.15 -5.44 L-5.44 -8.15 L-3.30 -5.99 Z M-1.91 -6.57 L-1.91 -9.61 L1.91 -9.61 L1.91 -6.57 Z M3.30 -5.99 L5.44 -8.15 L8.15 -5.44 L5.99 -3.30 Z " fill="#0c0c0c"/><circle cx="0.00" cy="0.00" r="7.6" fill="#0c0c0c"/><circle cx="0.00" cy="0.00" r="3.7" fill="#f7f7f7"/></svg>
<div class="t" style="left:304.0px;top:540.7px;font-size:13px;color:#333;font-weight:normal;transform:scaleX(0.9462);">Offset</div>
<div class="a" style="left:366px;top:540px;width:16px;height:16px;border:1px solid #c0c0c0;border-radius:50%;background:linear-gradient(#f7f7f7,#ececec);box-shadow:inset 0 0 0 1px #fafafa"></div>
<div class="t" style="left:387.2px;top:540.7px;font-size:13px;color:#333;font-weight:normal;transform:scaleX(0.9075);">Body</div>
<div class="a" style="left:444px;top:540px;width:16px;height:16px;border:1px solid #c0c0c0;border-radius:50%;background:linear-gradient(#f7f7f7,#ececec);box-shadow:inset 0 0 0 1px #fafafa"></div>
<div class="a" style="left:448px;top:544px;width:8px;height:8px;border-radius:50%;background:#4e5051"></div>
<div class="t" style="left:465.2px;top:540.7px;font-size:13px;color:#333;font-weight:normal;transform:scaleX(0.8487);">NED</div>
<div class="t" style="left:304.0px;top:571.8px;font-size:13px;color:#333;font-weight:normal;transform:scaleX(0.9907);">North</div>
<div class="inp" style="left:341px;top:566px;width:80px;height:24.5px;"></div>
<div class="t" style="left:345.7px;top:571.8px;font-size:13px;color:#333;font-weight:normal;transform:scaleX(0.8795);">0.0</div>
<div class="t" style="left:406.5px;top:572.6px;font-size:12px;color:#8a8a80;font-weight:normal;transform:scaleX(0.9300);">m</div>
<div class="t" style="left:426.0px;top:571.8px;font-size:13px;color:#333;font-weight:normal;transform:scaleX(0.8418);">East</div>
<div class="inp" style="left:453px;top:566px;width:80px;height:24.5px;"></div>
<div class="t" style="left:457.6px;top:571.8px;font-size:13px;color:#333;font-weight:normal;transform:scaleX(0.8795);">0.0</div>
<div class="t" style="left:518.4px;top:572.6px;font-size:12px;color:#8a8a80;font-weight:normal;transform:scaleX(0.9300);">m</div>
<div class="t" style="left:538.2px;top:571.8px;font-size:13px;color:#333;font-weight:normal;transform:scaleX(0.9293);">Down</div>
<div class="inp" style="left:574px;top:566px;width:80px;height:24.5px;"></div>
<div class="t" style="left:578.9px;top:571.8px;font-size:13px;color:#333;font-weight:normal;transform:scaleX(0.8795);">0.0</div>
<div class="t" style="left:639.3px;top:572.6px;font-size:12px;color:#8a8a80;font-weight:normal;transform:scaleX(0.9300);">m</div>
</body></html>
